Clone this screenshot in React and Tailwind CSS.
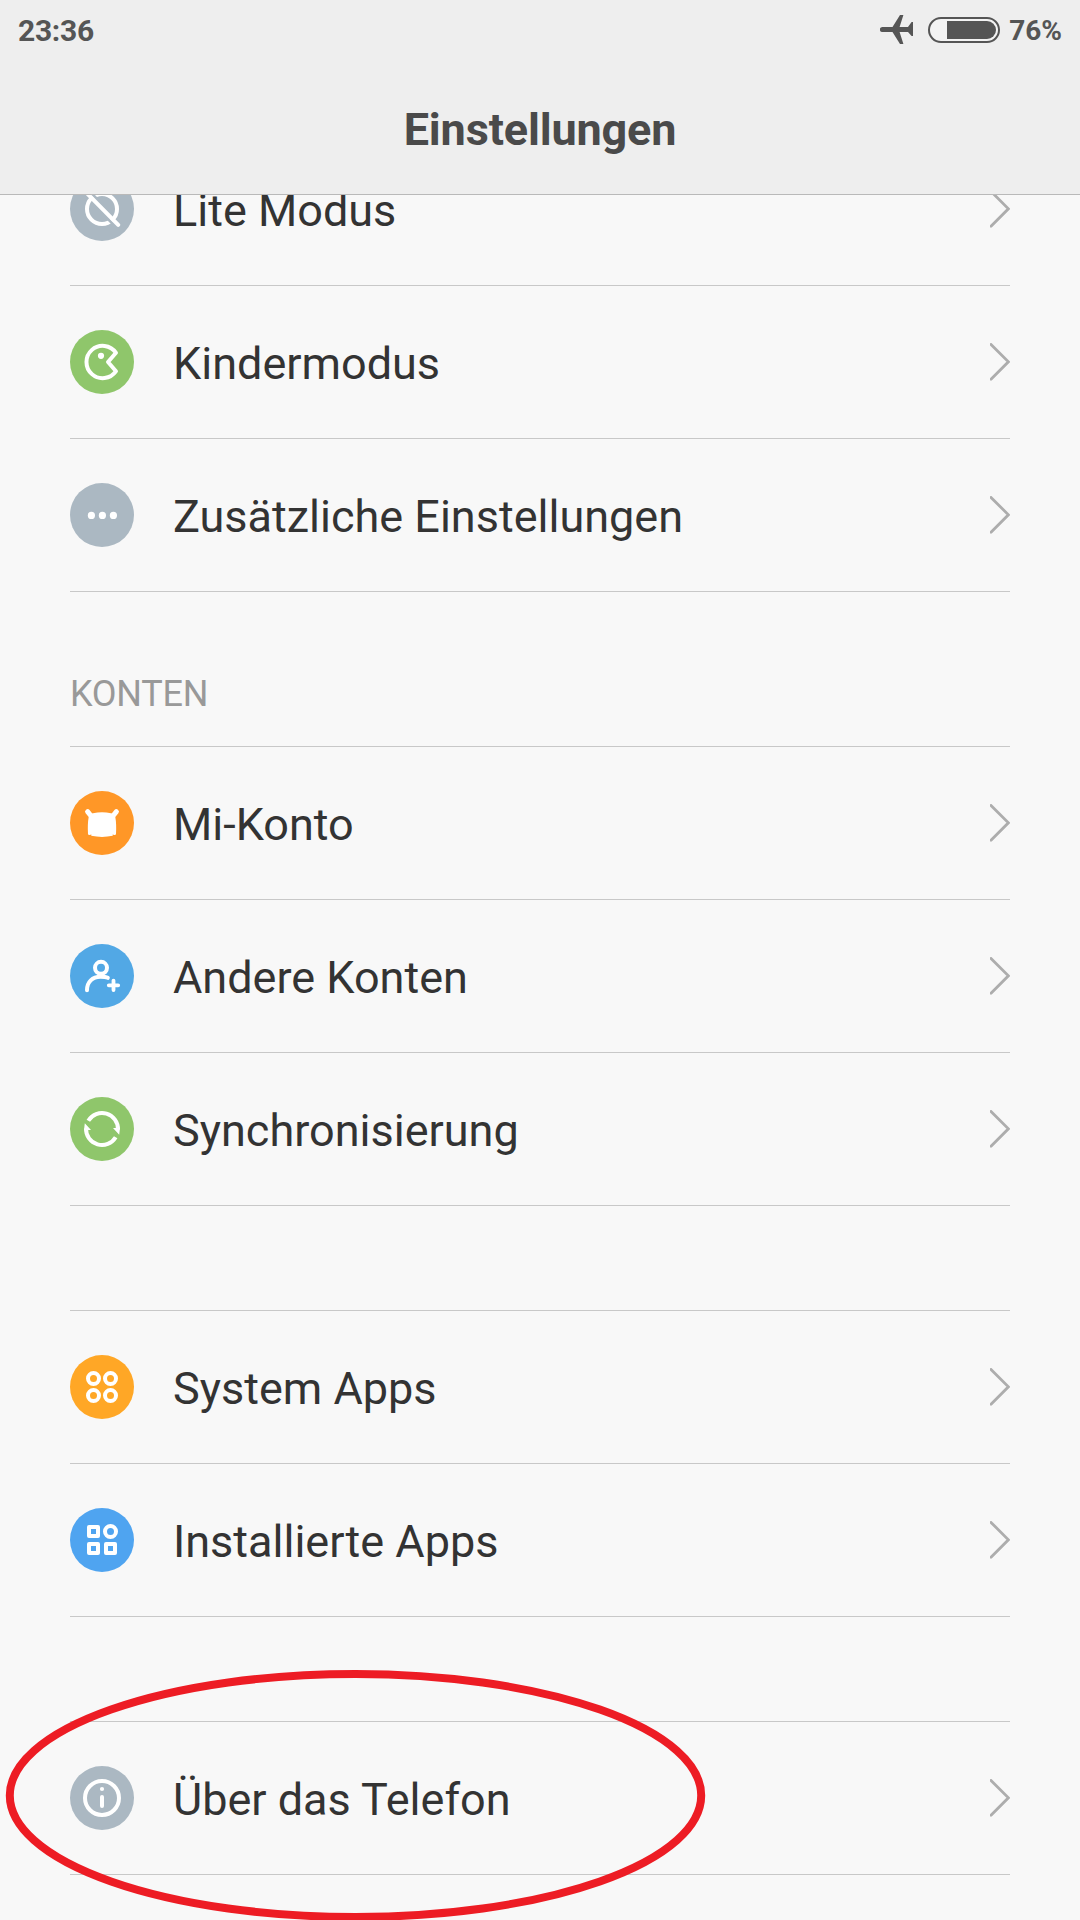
// src/App.jsx
const GREY = "#abb8c2";

function LiteIcon() {
  return (
    <>
      <circle cx="32" cy="32" r="15" strokeWidth="4" />
      <path d="M19.5 14.5 L32 27 M32 36 L44.5 48.5" stroke={GREY} strokeWidth="2.8" />
      <path d="M16.5 15.8 L48.2 47.8" strokeWidth="4" strokeLinecap="round" />
    </>
  );
}

function KidsIcon() {
  return (
    <>
      <path d="M46 22.8 A16.2 16.2 0 1 0 46 41.2 L38 32 Z" strokeWidth="4" strokeLinejoin="round" />
      <circle cx="31" cy="25.8" r="3.1" fill="white" stroke="none" />
    </>
  );
}

function DotsIcon() {
  return (
    <g fill="white" stroke="none">
      <circle cx="21.4" cy="32.4" r="3.6" />
      <circle cx="32.4" cy="32.4" r="3.6" />
      <circle cx="43.4" cy="32.4" r="3.6" />
    </g>
  );
}

function MiIcon() {
  return (
    <>
      <path d="M17.6 20.6 L21.5 25.5 M46.4 20.6 L42.5 25.5" strokeWidth="5" strokeLinecap="round" />
      <path
        d="M23 22.2 Q32 20.2 41 22.2 Q44.6 23 45.3 26 Q46.6 33 46 43 Q45.8 44.2 44.4 44 L42.6 43.6 L42.8 44.8 Q32 47 21.2 44.8 L21.4 43.6 L19.6 44 Q18.2 44.2 18 43 Q17.4 33 18.7 26 Q19.4 23 23 22.2 Z"
        fill="white"
        stroke="none"
      />
    </>
  );
}

function AddUserIcon() {
  return (
    <>
      <circle cx="31" cy="23.8" r="6" strokeWidth="4" />
      <path d="M17 46.2 C17 38 22.4 32.8 30.5 32.8 C34 32.8 36 32.9 37.8 33.8" strokeWidth="4" strokeLinecap="round" />
      <path d="M43.5 36.6 V46 M38.8 41.3 H48.2" strokeWidth="3.8" strokeLinecap="round" />
    </>
  );
}

function SyncIcon() {
  return (
    <>
      <path d="M18.3 23.8 A16 16 0 0 1 48 32.5" strokeWidth="4" />
      <path d="M45.7 40.2 A16 16 0 0 1 16 31.5" strokeWidth="4" />
      <path d="M43 31 L50 31 L49.2 37.8 Z M21 33 L14 33 L14.8 26.2 Z" fill="white" stroke="none" />
    </>
  );
}

function SystemAppsIcon() {
  return (
    <g strokeWidth="4">
      <circle cx="23.5" cy="23.5" r="5.5" />
      <circle cx="40.5" cy="23.5" r="5.5" />
      <circle cx="23.5" cy="40.5" r="5.5" />
      <circle cx="40.5" cy="40.5" r="5.5" />
    </g>
  );
}

function InstalledAppsIcon() {
  return (
    <g strokeWidth="4" strokeLinejoin="round">
      <rect x="19" y="19" width="9" height="9" />
      <circle cx="40.5" cy="23.5" r="5.5" />
      <rect x="19" y="36" width="9" height="9" />
      <rect x="36" y="36" width="9" height="9" />
    </g>
  );
}

function InfoIcon() {
  return (
    <>
      <circle cx="32" cy="32" r="17" strokeWidth="4" />
      <circle cx="32" cy="23" r="2.1" fill="white" stroke="none" />
      <path d="M32 31 V40" strokeWidth="4" strokeLinecap="round" />
    </>
  );
}

const mainItems = [
  { label: "Lite Modus", icon: LiteIcon, color: "bg-[#abb8c2]" },
  { label: "Kindermodus", icon: KidsIcon, color: "bg-[#8fc66b]" },
  { label: "Zusätzliche Einstellungen", icon: DotsIcon, color: "bg-[#abb8c2]" },
];

const accountItems = [
  { label: "Mi-Konto", icon: MiIcon, color: "bg-[#ff9727]" },
  { label: "Andere Konten", icon: AddUserIcon, color: "bg-[#52a8e5]" },
  { label: "Synchronisierung", icon: SyncIcon, color: "bg-[#8fc66b]" },
];

const appItems = [
  { label: "System Apps", icon: SystemAppsIcon, color: "bg-[#ffa726]" },
  { label: "Installierte Apps", icon: InstalledAppsIcon, color: "bg-[#4fa4f0]" },
];

const aboutItems = [{ label: "Über das Telefon", icon: InfoIcon, color: "bg-[#abb8c2]" }];

function SettingsRow({ label, icon: Icon, color }) {
  return (
    <li className="flex h-[153px] items-center border-b border-[#c8c8c8]">
      <div className={`size-16 shrink-0 rounded-full ${color}`}>
        <svg viewBox="0 0 64 64" className="size-16" fill="none" stroke="white">
          <Icon />
        </svg>
      </div>
      <span className="ml-[39px] flex-1 pt-[3px] text-[45px] leading-[54px] text-[#333]">{label}</span>
      <svg viewBox="0 0 20 38" className="h-[38px] w-5" fill="none" stroke="#adadad" strokeWidth="2.8" strokeLinecap="round">
        <path d="M1 1.4 L18.4 18.8 L1 36.2" />
      </svg>
    </li>
  );
}

function SettingsGroup({ items, className = "" }) {
  return (
    <ul className={className}>
      {items.map((item) => (
        <SettingsRow key={item.label} {...item} />
      ))}
    </ul>
  );
}

function StatusBar() {
  return (
    <div className="flex h-[60px] items-center justify-between pl-[18px] pr-[18px] font-bold text-[#555]">
      <span className="pt-[2px] text-[30px] leading-none tracking-[-0.3px]">23:36</span>
      <div className="flex items-center">
        <svg viewBox="0 0 33 29" className="mb-px h-[29px] w-[33px]" fill="#555">
          <path d="M2.4 12 H12.5 L20 0 H23.4 L19.6 12 H28 L31.6 7 H33 V21 H31.6 L28 17 H19.6 L23.4 29 H20 L12.5 17 H2.4 A2.5 2.5 0 0 1 2.4 12 Z" />
        </svg>
        {/* Battery */}
        <div className="ml-[15px] flex h-[26px] w-[72px] justify-end rounded-full border-2 border-[#555] bg-[#f3f3f3] p-[2px]">
          <div className="h-full w-[49px] rounded-r-full bg-[#555]" />
        </div>
        <span className="ml-[9px] pt-px text-[28px] leading-none">76%</span>
      </div>
    </div>
  );
}

export default function App() {
  return (
    <div className="relative flex h-[1920px] w-[1080px] flex-col overflow-hidden bg-[#f8f8f8] font-['Roboto',sans-serif]">
      <header className="h-[195px] shrink-0 border-b border-[#b9b9b9] bg-[#eee]">
        <StatusBar />
        <h1 className="pt-[43px] text-center text-[45px] leading-[54px] font-bold tracking-[-0.15px] text-[#4a4a4a]">
          Einstellungen
        </h1>
      </header>

      <main className="flex-1 overflow-hidden px-[70px]">
        {/* list is scrolled, so the first row sits partly under the header */}
        <SettingsGroup items={mainItems} className="-mt-[62px]" />

        <h2 className="flex h-[155px] items-end border-b border-[#c8c8c8] pb-[30px] text-[36px] leading-[44px] tracking-[-0.25px] text-[#999]">
          KONTEN
        </h2>
        <SettingsGroup items={accountItems} />
        <SettingsGroup items={appItems} className="mt-[104px] border-t border-[#c8c8c8]" />
        <SettingsGroup items={aboutItems} className="mt-[104px] border-t border-[#c8c8c8]" />
      </main>

      {/* Highlight around the last entry */}
      <svg viewBox="0 0 720 260" className="absolute top-[1660px] left-0 h-[260px] w-[720px]" fill="none">
        <ellipse cx="355.5" cy="135.5" rx="345.7" ry="121.5" stroke="#ed1c24" strokeWidth="8" />
      </svg>
    </div>
  );
}
